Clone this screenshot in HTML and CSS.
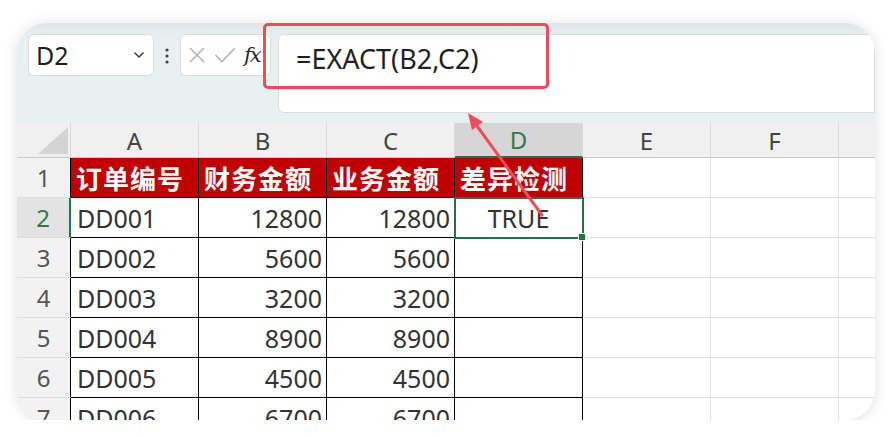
FILE: index.html
```html
<!DOCTYPE html>
<html lang="zh">
<head>
<meta charset="utf-8">
<link rel="stylesheet" href="styles.css">
</head>
<body>
<div class="card">
  <div class="toolbar">
    <div class="namebox">
      <span class="ref">D2</span>
      <svg class="chev" width="12" height="8" viewBox="0 0 12 8"><path d="M1.5 1.5 L6 6 L10.5 1.5" fill="none" stroke="#333" stroke-width="1.4"/></svg>
    </div>
    <svg class="dots" width="6" height="18" viewBox="0 0 6 18"><circle cx="3" cy="3" r="1.6" fill="#444"/><circle cx="3" cy="9" r="1.6" fill="#444"/><circle cx="3" cy="15" r="1.6" fill="#444"/></svg>
    <div class="fxbox">
      <svg width="18" height="18" viewBox="0 0 18 18"><path d="M2 2 L16 16 M16 2 L2 16" stroke="#b4b4b4" stroke-width="1.6" fill="none"/></svg>
      <svg width="22" height="18" viewBox="0 0 22 18"><path d="M1.5 9 L8 15.5 L20.5 2.5" stroke="#b4b4b4" stroke-width="1.6" fill="none"/></svg>
      <span class="fx">fx</span>
    </div>
    <div class="formula">=EXACT(B2,C2)</div>
  </div>
  <div class="grid">
    <div class="h corner"><span class="tri"></span></div>
    <div class="h col">A</div>
    <div class="h col">B</div>
    <div class="h col">C</div>
    <div class="h col sel">D</div>
    <div class="h col">E</div>
    <div class="h col">F</div>
    <div class="h col rest"></div>

    <div class="rn">1</div>
    <div class="c d red">订单编号</div>
    <div class="c d red">财务金额</div>
    <div class="c d red">业务金额</div>
    <div class="c d red">差异检测</div>
    <div class="c"></div><div class="c"></div><div class="c rest"></div>

    <div class="rn rsel">2</div>
    <div class="c d">DD001</div>
    <div class="c d num">12800</div>
    <div class="c d num">12800</div>
    <div class="c d mid active">TRUE<span class="handle"></span></div>
    <div class="c"></div><div class="c"></div><div class="c rest"></div>

    <div class="rn">3</div>
    <div class="c d">DD002</div>
    <div class="c d num">5600</div>
    <div class="c d num">5600</div>
    <div class="c d"></div>
    <div class="c"></div><div class="c"></div><div class="c rest"></div>

    <div class="rn">4</div>
    <div class="c d">DD003</div>
    <div class="c d num">3200</div>
    <div class="c d num">3200</div>
    <div class="c d"></div>
    <div class="c"></div><div class="c"></div><div class="c rest"></div>

    <div class="rn">5</div>
    <div class="c d">DD004</div>
    <div class="c d num">8900</div>
    <div class="c d num">8900</div>
    <div class="c d"></div>
    <div class="c"></div><div class="c"></div><div class="c rest"></div>

    <div class="rn">6</div>
    <div class="c d">DD005</div>
    <div class="c d num">4500</div>
    <div class="c d num">4500</div>
    <div class="c d"></div>
    <div class="c"></div><div class="c"></div><div class="c rest"></div>

    <div class="rn">7</div>
    <div class="c d">DD006</div>
    <div class="c d num">6700</div>
    <div class="c d num">6700</div>
    <div class="c d"></div>
    <div class="c"></div><div class="c"></div><div class="c rest"></div>
  </div>
  <div class="highlight"></div>
  <svg class="arrow" width="858" height="397" viewBox="0 0 858 397">
    <line x1="525" y1="192" x2="460" y2="103" stroke="#f04a5c" stroke-width="3" stroke-linecap="round"/>
    <polygon points="451,90 466,99 455,107" fill="#f04a5c"/>
  </svg>
</div>
</body>
</html>
```
FILE: styles.css
```css
html, body {
  margin: 0;
  padding: 0;
  background: #ffffff;
}
body {
  font-family: "Noto Sans", "Noto Sans CJK SC", sans-serif;
}
.card {
  position: relative;
  margin: 23px 17px 0 17px;
  width: 858px;
  height: 397px;
  border-radius: 30px;
  overflow: hidden;
  background: #ffffff;
  box-shadow: 0 1px 14px rgba(0, 0, 0, 0.13);
}
.toolbar {
  height: 100px;
  box-sizing: border-box;
  padding: 11px 0 0 11px;
  display: flex;
  align-items: flex-start;
  background: linear-gradient(#dfe5e7 0, #e8eff1 12px, #e9f0f2 100%);
}
.namebox {
  width: 126px;
  height: 42px;
  box-sizing: border-box;
  background: #fff;
  border: 1px solid #d8dde0;
  border-radius: 6px;
  display: flex;
  align-items: center;
  justify-content: space-between;
  padding: 0 8px 0 7px;
}
.ref {
  font-size: 25px;
  color: #1f1f1f;
  line-height: 1;
}
.dots {
  margin: 13px 10px 0 10px;
}
.fxbox {
  width: 91px;
  height: 42px;
  box-sizing: border-box;
  background: #fff;
  border: 1px solid #d8dde0;
  border-radius: 6px;
  display: flex;
  align-items: center;
  gap: 8px;
  padding: 0 0 0 7px;
}
.fx {
  font-family: "DejaVu Serif", "Liberation Serif", serif;
  font-style: italic;
  font-size: 21px;
  color: #2a2a2a;
  letter-spacing: -2px;
}
.formula {
  margin-left: 7px;
  flex: 1;
  height: 79px;
  box-sizing: border-box;
  background: #fff;
  border: 1px solid #d8dde0;
  border-radius: 6px 0 0 6px;
  padding: 7px 0 0 17px;
  font-size: 27px;
  line-height: 34px;
  color: #1f1f1f;
}
.grid {
  display: grid;
  grid-template-columns: 54px repeat(6, 128px) 1fr;
  grid-template-rows: 35px repeat(7, 40px);
}
.h {
  background: #f0f0f0;
  border-bottom: 1px solid #c9c9c9;
  border-right: 1px solid #dadada;
  box-sizing: border-box;
  display: flex;
  align-items: center;
  justify-content: center;
  font-size: 24px;
  color: #444;
}
.h.rest { border-right: none; }
.h.sel {
  background: #d6d6d6;
  color: #2f7a52;
  border-bottom: 2px solid #217346;
}
.corner {
  position: relative;
  background: #f0f0f0;
}
.tri {
  position: absolute;
  right: 2px;
  bottom: 3px;
  width: 0;
  height: 0;
  border-left: 30px solid transparent;
  border-bottom: 27px solid #d4d4d4;
}
.rn {
  background: #f2f2f2;
  border-right: 1px solid #000;
  border-bottom: 1px solid #dcdcdc;
  box-sizing: border-box;
  display: flex;
  align-items: center;
  justify-content: center;
  font-size: 24px;
  color: #555;
}
.rn.rsel {
  background: #e3e3e3;
  color: #2f7a52;
  border-right: 2px solid #217346;
}
.c {
  box-sizing: border-box;
  border-right: 1px solid #e1e1e1;
  border-bottom: 1px solid #e1e1e1;
  display: flex;
  align-items: center;
  padding: 0 6px;
  font-size: 25px;
  color: #333;
  white-space: nowrap;
  position: relative;
}
.c.rest { border-right: none; }
.c.d {
  border-right-color: #000;
  border-bottom-color: #000;
}
.c.red {
  background: #c00000;
  color: #fff;
  font-family: "Noto Sans CJK SC", sans-serif;
  font-weight: 700;
  font-size: 26px;
  letter-spacing: 1px;
  padding-left: 5px;
}
.c.num {
  justify-content: flex-end;
  padding-right: 4px;
}
.c.mid {
  justify-content: center;
}
.c.active {
  outline: 2px solid #217346;
  outline-offset: -1px;
  z-index: 2;
}
.handle {
  position: absolute;
  right: -4px;
  bottom: -4px;
  width: 6px;
  height: 6px;
  background: #217346;
  border: 1px solid #fff;
}
.highlight {
  position: absolute;
  left: 246px;
  top: 0;
  width: 286px;
  height: 66px;
  box-sizing: border-box;
  border: 3px solid #f04a5c;
  border-radius: 5px;
}
.arrow {
  position: absolute;
  left: 0;
  top: 0;
  pointer-events: none;
  z-index: 5;
}
```
